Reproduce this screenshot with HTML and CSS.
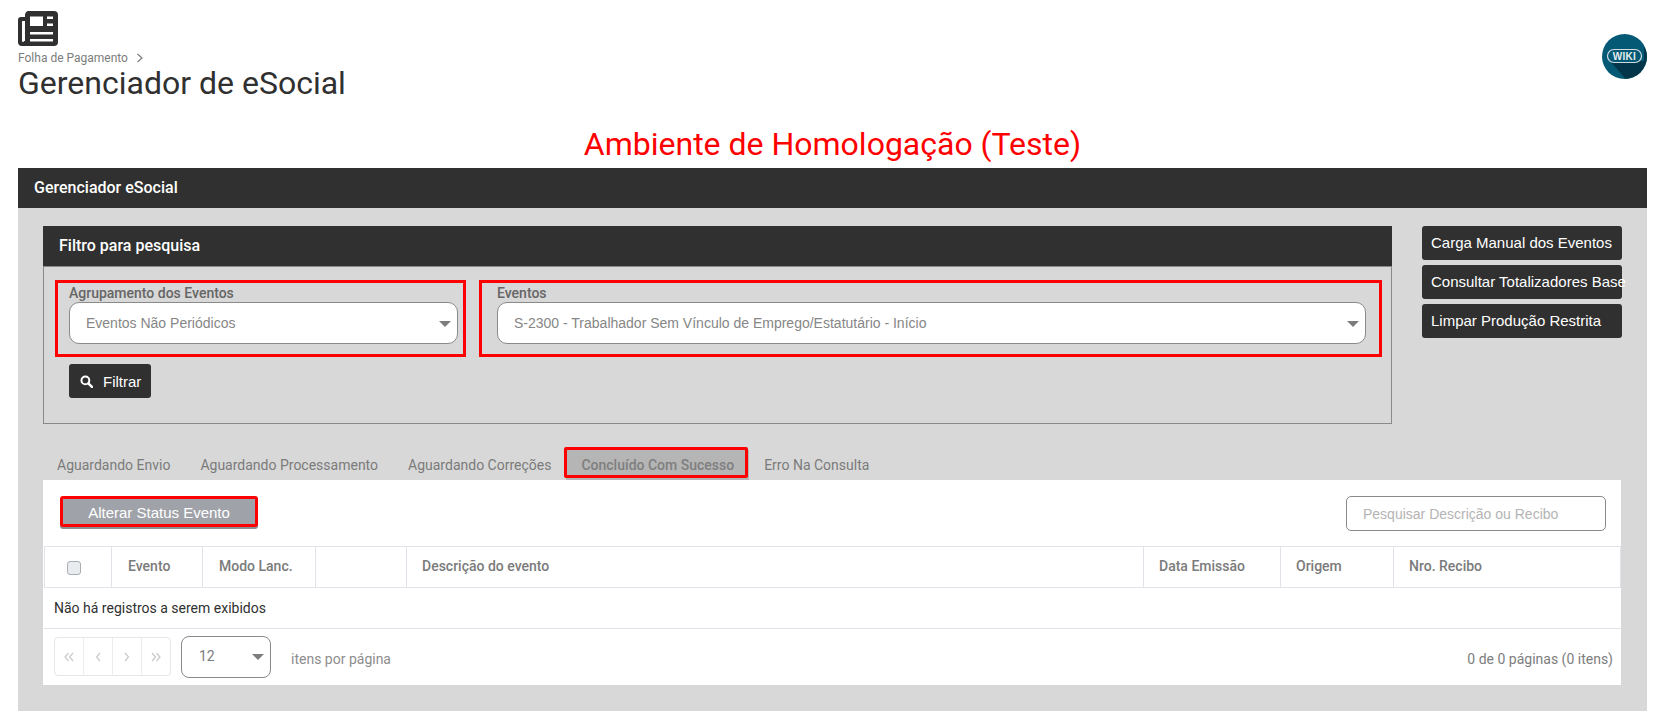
FILE: index.html
```html
<!DOCTYPE html>
<html lang="pt-BR">
<head>
<meta charset="utf-8">
<title>Gerenciador de eSocial</title>
<link rel="stylesheet" href="styles.css">
</head>
<body>
<header class="page-head">
  <div class="head-left">
    <svg class="news-icon" viewBox="0 0 40 35" width="40" height="35" aria-hidden="true">
      <path fill="#303030" fill-rule="evenodd" d="M12 0h24a4 4 0 0 1 4 4v27a4 4 0 0 1-4 4H4a4 4 0 0 1-4-4V9a3 3 0 0 1 3-3h4V4a4 4 0 0 1 5-4zM4 10v20a1 1 0 0 0 2 0h1V10zM12 5.500v9.500h13V5.500zM29 5.500v2.500h6V5.500zM29 12.500v2.500h6v-2.500zM12 21v2.500h23V21zM12 28v2.500h23V28z"/>
    </svg>
    <div class="crumb">Folha de Pagamento
      <svg class="crumb-sep" viewBox="0 0 8 10" width="8" height="10" aria-hidden="true"><path d="M1.500 1l4.500 4-4.500 4" fill="none" stroke="#7d7d7d" stroke-width="1.200"/></svg>
    </div>
    <h1 class="page-title">Gerenciador de eSocial</h1>
  </div>
  <svg class="wiki" viewBox="0 0 45 45" width="45" height="45" role="img" aria-label="Wiki">
    <defs><clipPath id="wikiClip"><circle cx="22.500" cy="22.500" r="22.500"/></clipPath></defs>
    <circle cx="22.500" cy="22.500" r="22.500" fill="#045a74"/>
    <path clip-path="url(#wikiClip)" d="M8 27H42V12L50 30V50H28z" fill="#03364a"/>
    <rect x="5.500" y="15.500" width="34" height="13" rx="6.500" fill="#045a74" stroke="#cfdde3" stroke-width="1.200"/>
    <text x="22.500" y="25.800" class="wiki-text" text-anchor="middle">WIKI</text>
  </svg>
</header>

<div class="env-title">Ambiente de Homologação (Teste)</div>

<main class="panel">
  <div class="bar">Gerenciador eSocial</div>
  <div class="panel-body">
    <div class="top-row">
      <section class="filter">
        <div class="filter-head">Filtro para pesquisa</div>
        <div class="filter-body">
          <div class="fields">
            <div class="field field-a">
              <div class="field-label">Agrupamento dos Eventos</div>
              <div class="select">Eventos Não Periódicos<span class="caret"></span></div>
            </div>
            <div class="field field-b">
              <div class="field-label">Eventos</div>
              <div class="select">S-2300 - Trabalhador Sem Vínculo de Emprego/Estatutário - Início<span class="caret"></span></div>
            </div>
          </div>
          <button class="btn-filter" type="button">
            <svg viewBox="0 0 14 14" width="13" height="13" aria-hidden="true"><circle cx="5.800" cy="5.800" r="4.200" fill="none" stroke="#fff" stroke-width="2.200"/><path d="M9 9l3.800 3.800" stroke="#fff" stroke-width="2.600" stroke-linecap="round"/></svg>
            Filtrar
          </button>
        </div>
      </section>
      <div class="side-actions">
        <button class="btn-side" type="button"><span class="btn-side-text">Carga Manual dos Eventos</span></button>
        <button class="btn-side" type="button"><span class="btn-side-text">Consultar Totalizadores Base</span></button>
        <button class="btn-side" type="button"><span class="btn-side-text">Limpar Produção Restrita</span></button>
      </div>
    </div>

    <nav class="tabs">
      <div class="tab">Aguardando Envio</div>
      <div class="tab">Aguardando Processamento</div>
      <div class="tab">Aguardando Correções</div>
      <div class="tab tab-active">Concluído Com Sucesso</div>
      <div class="tab">Erro Na Consulta</div>
    </nav>

    <section class="content">
      <div class="toolbar">
        <button class="btn-status" type="button">Alterar Status Evento</button>
        <input class="search" type="text" placeholder="Pesquisar Descrição ou Recibo">
      </div>
      <table class="grid">
        <colgroup>
          <col class="c-check"><col class="c-event"><col class="c-mode"><col class="c-blank"><col class="c-desc"><col class="c-date"><col class="c-origin"><col class="c-receipt">
        </colgroup>
        <thead>
          <tr>
            <th class="th-check"><span class="check"></span></th>
            <th class="th-nudge">Evento</th>
            <th class="th-nudge">Modo Lanc.</th>
            <th></th>
            <th>Descrição do evento</th>
            <th>Data Emissão</th>
            <th>Origem</th>
            <th>Nro. Recibo</th>
          </tr>
        </thead>
      </table>
      <div class="empty">Não há registros a serem exibidos</div>
      <div class="pager">
        <div class="pager-nav">
          <span class="pg"><svg viewBox="0 0 10 10" width="10" height="10" aria-hidden="true"><path d="M4.500 1L1 5l3.500 4M9 1L5.500 5 9 9" fill="none" stroke="#c9c9c9" stroke-width="1.200"/></svg></span>
          <span class="pg"><svg viewBox="0 0 10 10" width="10" height="10" aria-hidden="true"><path d="M7 1L3.500 5 7 9" fill="none" stroke="#c9c9c9" stroke-width="1.200"/></svg></span>
          <span class="pg"><svg viewBox="0 0 10 10" width="10" height="10" aria-hidden="true"><path d="M3 1l3.500 4L3 9" fill="none" stroke="#c9c9c9" stroke-width="1.200"/></svg></span>
          <span class="pg"><svg viewBox="0 0 10 10" width="10" height="10" aria-hidden="true"><path d="M1 1l3.500 4L1 9M5.500 1L9 5 5.500 9" fill="none" stroke="#c9c9c9" stroke-width="1.200"/></svg></span>
        </div>
        <div class="page-size">12<span class="caret"></span></div>
        <span class="per-page">itens por página</span>
        <span class="page-info">0 de 0 páginas (0 itens)</span>
      </div>
    </section>
  </div>
</main>
</body>
</html>
```
FILE: styles.css
```css
* { box-sizing: border-box; }
html, body { margin: 0; padding: 0; }
body {
  width: 1659px;
  height: 724px;
  overflow: hidden;
  background: #fff;
  font-family: Roboto, "Liberation Sans", sans-serif;
  color: #303030;
}
.page-head {
  display: flex;
  justify-content: space-between;
  align-items: flex-start;
  padding: 11px 12px 0 18px;
  height: 115px;
}
.news-icon { display: block; }
.crumb {
  display: flex;
  align-items: center;
  gap: 8px;
  height: 13px;
  margin-top: 5px;
  font-size: 12px;
  line-height: 14px;
  color: #7d7d7d;
}
.crumb-sep { flex: none; }
.page-title {
  margin: 0;
  font-size: 32px;
  font-weight: 400;
  line-height: 38px;
  color: #303030;
}
.wiki { margin-top: 23px; flex: none; }
.wiki-text { font: 700 10px "Liberation Sans", sans-serif; fill: #e6eef1; letter-spacing: .3px; }
.env-title {
  height: 43px;
  margin-top: 10px;
  text-align: center;
  font-size: 32px;
  line-height: 38px;
  color: #f00;
  padding-left: 6px;
}
.panel {
  margin: 0 12px 0 18px;
  background: #d8d8d8;
  height: 543px;
}
.bar, .filter-head {
  background: #303030;
  color: #fff;
  height: 40px;
  line-height: 39px;
  padding-left: 16px;
  font-size: 16px;
  font-weight: 500;
}
.panel-body { padding: 18px 25px 0; }
.top-row { display: flex; align-items: flex-start; }
.filter { width: 1349px; flex: none; }
.filter-body {
  height: 158px;
  border: 1px solid #8a8a8a;
  padding: 13px 0 0 11px;
}
.fields { display: flex; gap: 13px; }
.field { border: 3px solid #f00; height: 77px; }
.field-a { width: 411px; padding: 0 5px 0 11px; }
.field-b { width: 903px; padding: 0 13px 0 15px; }
.field-label {
  padding-top: 1px;
  height: 19px;
  font-size: 14px;
  font-weight: 500;
  line-height: 19px;
  color: #666;
}
.select {
  position: relative;
  height: 42px;
  line-height: 40px;
  border: 1px solid #8a8a8a;
  border-radius: 10px;
  background: #fff;
  padding-left: 16px;
  font-family: "Liberation Sans", sans-serif;
  font-size: 14px;
  color: #868686;
}
.caret {
  position: absolute;
  right: 6px;
  top: 18px;
  width: 0;
  height: 0;
  border-left: 6px solid transparent;
  border-right: 6px solid transparent;
  border-top: 6px solid #7d7d7d;
}
.btn-filter {
  display: flex;
  align-items: center;
  gap: 10px;
  margin: 7px 0 0 14px;
  width: 82px;
  height: 34px;
  padding: 0 0 0 11px;
  border: 0;
  border-radius: 3px;
  background: #303030;
  color: #fff;
  font: 400 15px "Liberation Sans", sans-serif;
}
.side-actions {
  display: flex;
  flex-direction: column;
  gap: 5px;
  margin-left: 30px;
}
.btn-side {
  width: 200px;
  height: 34px;
  padding: 0 0 1px 9px;
  border: 0;
  border-radius: 3px;
  background: #303030;
  color: #fff;
  text-align: left;
  white-space: nowrap;
  font: 400 15px "Liberation Sans", sans-serif;
}
.btn-side-text { display: block; width: 191px; }
.tabs {
  display: flex;
  height: 56px;
  padding: 26px 0 0 0;
  margin-left: -1px;
}
.tab {
  position: relative;
  height: 30px;
  line-height: 30px;
  padding: 0 15px;
  font-size: 14px;
  color: #7b7b7b;
  white-space: nowrap;
}
.tab-active {
  background: #b5b5b5;
  font-weight: 500;
  color: #7f7f7f;
}
.tab-active::after {
  content: "";
  position: absolute;
  inset: -3px 1px 2px -2px;
  border: 3px solid #f00;
  border-radius: 2px;
}
.content { background: #fff; width: 1578px; height: 205px; }
.toolbar {
  display: flex;
  justify-content: space-between;
  align-items: flex-start;
  height: 66px;
  padding: 16px 15px 0 17px;
}
.btn-status {
  width: 198px;
  height: 31px;
  padding: 1px 0 0;
  border: 3px solid #f00;
  border-radius: 3px;
  background: #9fa3a9;
  color: #fff;
  box-shadow: 0 2px 0 #8c8f94;
  font: 400 15px "Liberation Sans", sans-serif;
}
.search {
  width: 260px;
  height: 35px;
  border: 1px solid #8a8a8a;
  border-radius: 5px;
  padding: 0 16px;
  font: 400 14px "Liberation Sans", sans-serif;
  outline: 0;
}
.search::placeholder { color: #b4b4b4; opacity: 1; }
.grid {
  table-layout: fixed;
  border-collapse: collapse;
  width: 1576px;
  margin-left: 1px;
}
.c-check { width: 67px; }
.c-event { width: 91px; }
.c-mode { width: 113px; }
.c-blank { width: 91px; }
.c-desc { width: 737px; }
.c-date { width: 137px; }
.c-origin { width: 113px; }
.c-receipt { width: 227px; }
.grid th {
  height: 41px;
  padding: 0 0 2px 15px;
  border: 1px solid #e1e3ea;
  text-align: left;
  font-size: 14px;
  font-weight: 500;
  color: #7b7b7b;
}
.grid .th-nudge { padding-left: 16px; }
.grid .th-check { padding: 0 0 0 22px; }
.check {
  display: block;
  width: 14px;
  height: 14px;
  margin-top: 1px;
  border: 1px solid #a9adb4;
  border-radius: 3px;
  background: #e9ecef;
}
.empty {
  height: 41px;
  line-height: 41px;
  padding-left: 10px;
  font-size: 14px;
  color: #303030;
  border-bottom: 1px solid #e1e3ea;
  margin-left: 1px;
  width: 1577px;
}
.pager {
  display: flex;
  align-items: center;
  height: 55px;
  padding-left: 11px;
}
.pager-nav {
  display: flex;
  width: 117px;
  height: 39px;
  border: 1px solid #e6e6e6;
  border-radius: 4px;
}
.pg {
  flex: 1;
  display: flex;
  align-items: center;
  justify-content: center;
  border-left: 1px solid #ececec;
}
.pg:first-child { border-left: 0; }
.page-size {
  position: relative;
  width: 90px;
  height: 42px;
  margin-left: 10px;
  line-height: 38px;
  padding-left: 17px;
  border: 1px solid #8a8a8a;
  border-radius: 8px;
  font-size: 14px;
  color: #7d7d7d;
}
.page-size .caret { right: 6px; top: 17px; }
.per-page { margin-left: 20px; padding-top: 4px; font-size: 14px; color: #8d8d8d; }
.page-info {
  margin-left: auto;
  margin-right: 8px;
  padding-top: 4px;
  font-size: 14px;
  color: #7d7d7d;
}
```
